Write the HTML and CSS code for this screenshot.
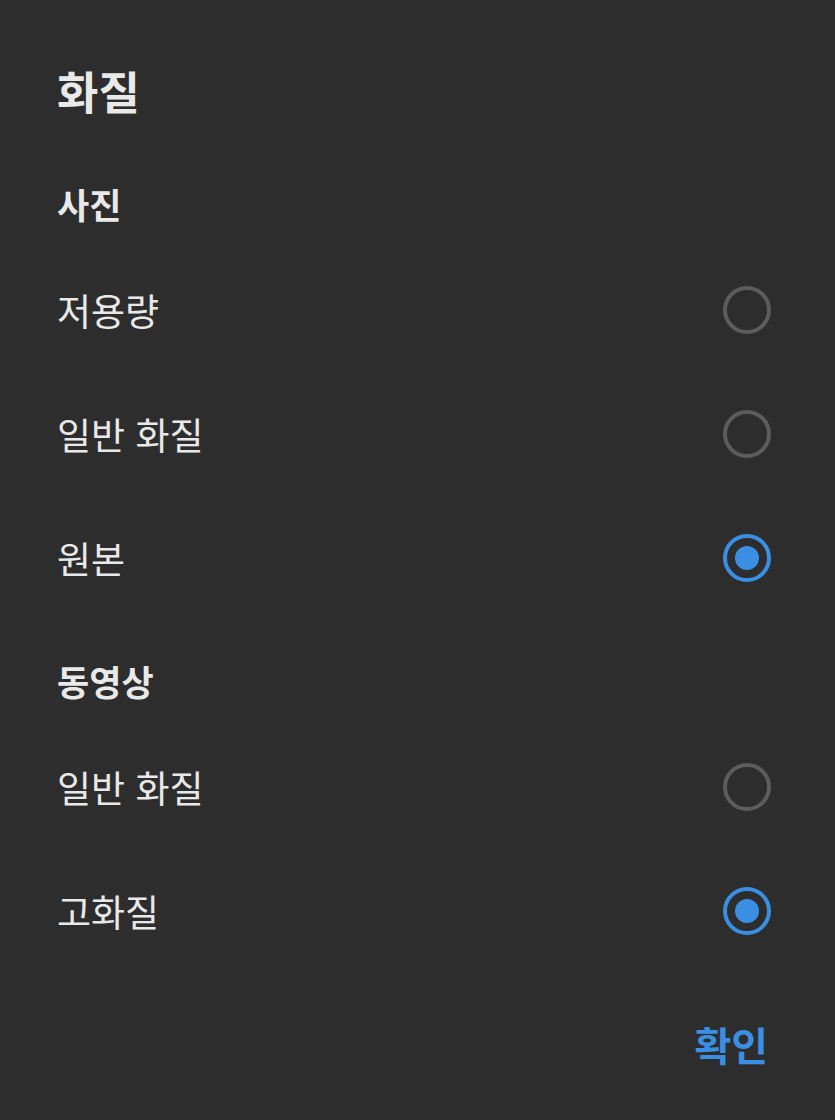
FILE: index.html
```html
<!DOCTYPE html>
<html lang="ko">
<head>
<meta charset="utf-8">
<title>화질</title>
<link rel="stylesheet" href="styles.css">
</head>
<body>
<div class="dialog">
  <h1 class="title">화질</h1>

  <div class="section">사진</div>
  <div class="row"><span class="label">저용량</span><span class="radio"></span></div>
  <div class="row"><span class="label">일반 화질</span><span class="radio"></span></div>
  <div class="row"><span class="label">원본</span><span class="radio checked"></span></div>

  <div class="section section-2">동영상</div>
  <div class="row"><span class="label">일반 화질</span><span class="radio"></span></div>
  <div class="row"><span class="label">고화질</span><span class="radio checked"></span></div>

  <div class="actions"><span class="btn">확인</span></div>
</div>
</body>
</html>
```
FILE: styles.css
```css
html, body {
  margin: 0;
  padding: 0;
  background: #2d2d2d;
}
body {
  width: 835px;
  height: 1120px;
  overflow: hidden;
  font-family: "Noto Sans CJK KR", "Noto Sans", sans-serif;
  color: #e9e9e9;
}
.dialog {
  display: flex;
  flex-direction: column;
  padding: 0 64px 0 57px;
}
.title {
  margin: 61px 0 0;
  height: 60px;
  line-height: 60px;
  font-size: 45px;
  font-weight: 700;
}
.section {
  margin-top: 53px;
  margin-bottom: 14px;
  height: 60px;
  line-height: 60px;
  font-size: 35px;
  font-weight: 700;
}
.section-2 {
  margin-top: 31px;
}
.row {
  height: 124px;
  display: flex;
  align-items: center;
  justify-content: space-between;
}
.label {
  font-size: 37px;
  font-weight: 400;
  line-height: 1;
}
.radio {
  width: 48px;
  height: 48px;
  box-sizing: border-box;
  border: 4px solid #5c5c5c;
  border-radius: 50%;
  display: flex;
  align-items: center;
  justify-content: center;
}
.radio.checked {
  border-color: #3a8fe3;
}
.radio.checked::after {
  content: "";
  width: 24px;
  height: 24px;
  border-radius: 50%;
  background: #3a8fe3;
}
.actions {
  margin-top: 41px;
  height: 60px;
  display: flex;
  justify-content: flex-end;
  align-items: center;
}
.btn {
  font-size: 40px;
  font-weight: 700;
  color: #3a8fe3;
  margin-right: 3px;
  line-height: 1;
}
```
